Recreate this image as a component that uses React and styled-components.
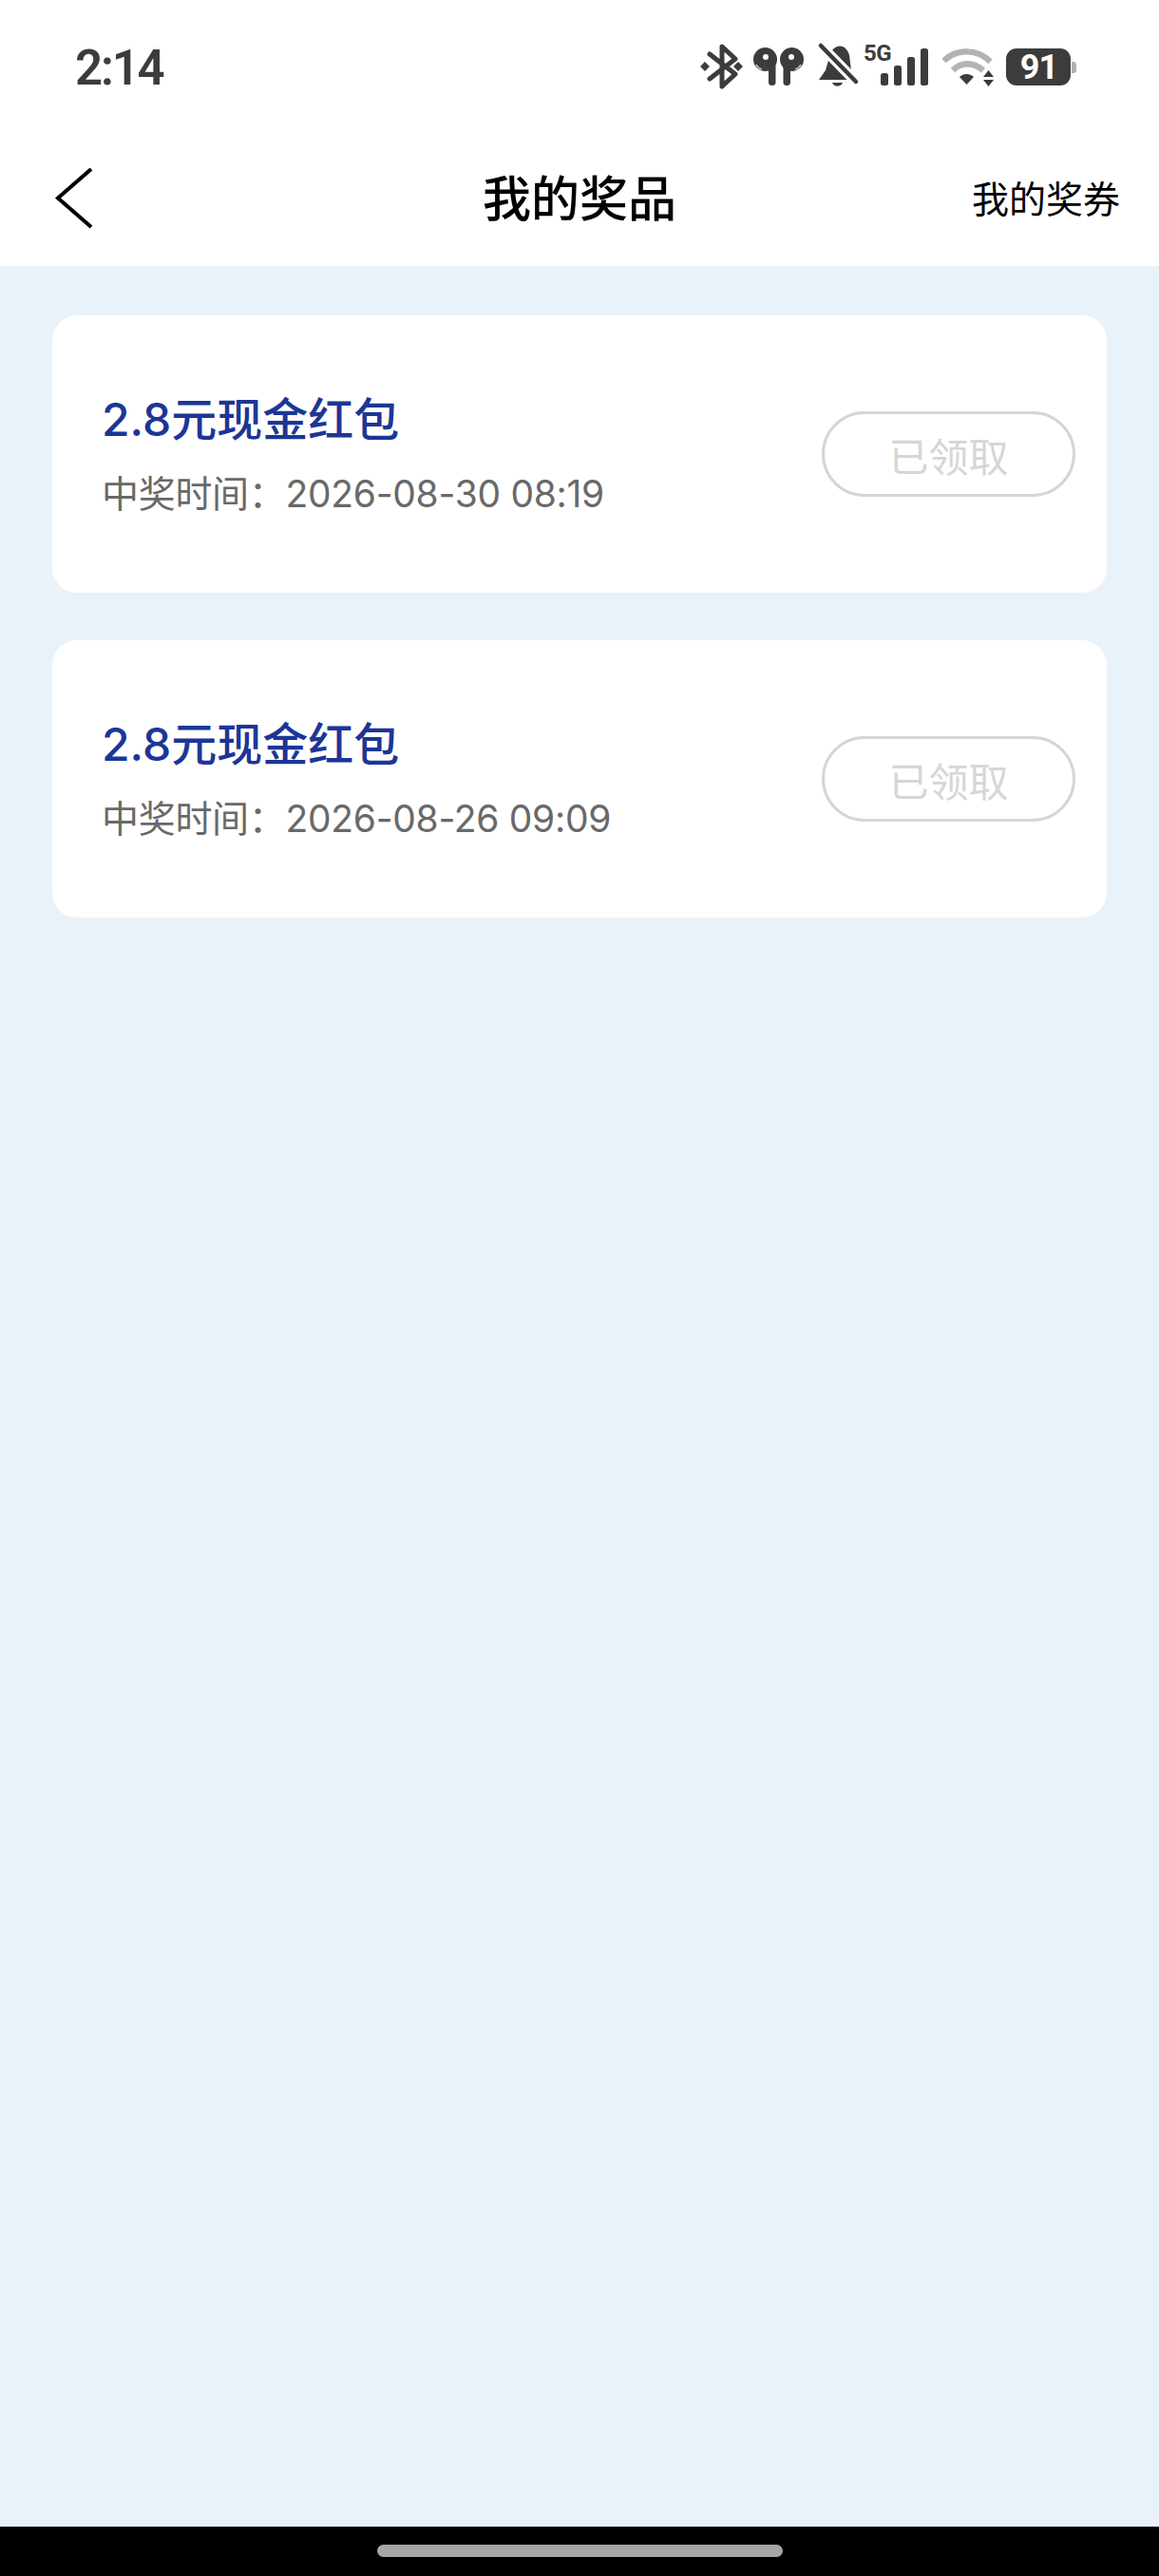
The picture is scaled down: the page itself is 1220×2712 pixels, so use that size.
import React from "react";
import styled, { createGlobalStyle } from "styled-components";

const prizes = [
  { title: "2.8元现金红包", time: "2026-08-30 08:19" },
  { title: "2.8元现金红包", time: "2026-08-26 09:09" },
];

const GlobalStyle = createGlobalStyle`
  html, body {
    margin: 0;
    padding: 0;
    background: #e9f2f9;
  }
  * {
    box-sizing: border-box;
  }
`;

const Screen = styled.div`
  width: 1220px;
  height: 2712px;
  display: flex;
  flex-direction: column;
  background: #e9f2f9;
  font-family: Inter, "Noto Sans CJK SC", sans-serif;
`;

const StatusBar = styled.div`
  height: 140px;
  flex: none;
  background: #fff;
  display: flex;
  align-items: flex-start;
  justify-content: space-between;
  padding: 0 85px 0 79px;
`;

const Clock = styled.div`
  font-family: Roboto, sans-serif;
  font-size: 51px;
  line-height: 60px;
  letter-spacing: -2.2px;
  font-weight: 600;
  color: #3c3c3c;
  margin-top: 42px;
`;

const StatusIcons = styled.svg`
  display: block;
  width: 396px;
  height: 66px;
  margin-top: 44px;
  overflow: visible;
`;

const NavBar = styled.div`
  height: 140px;
  flex: none;
  background: #fff;
  display: grid;
  grid-template-columns: 1fr auto 1fr;
  align-items: center;
  padding: 0 41px;
`;

const BackIcon = styled.svg`
  display: block;
  width: 44px;
  height: 66px;
  margin-left: 15px;
`;

const NavTitle = styled.div`
  font-size: 51px;
  font-weight: 500;
  color: #000;
  line-height: 60px;
`;

const NavLink = styled.div`
  justify-self: end;
  font-size: 39px;
  color: #000;
  line-height: 50px;
`;

const List = styled.div`
  display: flex;
  flex-direction: column;
  gap: 50px;
  padding: 52px 55px 0;
  flex: 1;
`;

const Card = styled.div`
  height: 292px;
  background: #fff;
  border-radius: 26px;
  display: flex;
  align-items: center;
  justify-content: space-between;
  padding: 0 33px 0 52px;
`;

const Info = styled.div`
  display: flex;
  flex-direction: column;
  gap: 23px;
`;

const PrizeName = styled.div`
  font-size: 48px;
  font-weight: 500;
  line-height: 60px;
  color: #1c3696;
`;

const PrizeTime = styled.div`
  font-size: 39px;
  line-height: 50px;
  letter-spacing: -0.3px;
  color: #696969;
`;

const ClaimedButton = styled.div`
  width: 267px;
  height: 90px;
  border: 3px solid #d5d5d5;
  border-radius: 45px;
  display: flex;
  align-items: center;
  justify-content: center;
  font-size: 42px;
  color: #d6d6d6;
`;

const GestureBar = styled.div`
  height: 52px;
  flex: none;
  background: #000;
  display: flex;
  justify-content: center;
  padding-top: 19px;
`;

const GesturePill = styled.div`
  width: 427px;
  height: 13px;
  border-radius: 7px;
  background: #a6a6a6;
`;

function StatusGlyphs() {
  return (
    <StatusIcons viewBox="741 44 396 66">
      {/* bluetooth */}
      <path d="M762 91 V49 L776 62 L749 83 M762 91 L776 78 L749 57" fill="none" stroke="#3c3c3c" strokeWidth="5" strokeLinejoin="round" strokeLinecap="round" />
      <rect x="740.5" y="66.5" width="7" height="7" transform="rotate(45 744 70)" fill="#3c3c3c" />
      <rect x="775.5" y="66.5" width="7" height="7" transform="rotate(45 779 70)" fill="#3c3c3c" />
      {/* earbuds */}
      <circle cx="807.5" cy="62.5" r="12.5" fill="#3c3c3c" />
      <rect x="811" y="66" width="7.5" height="24" rx="3.5" fill="#3c3c3c" />
      <circle cx="808" cy="60" r="3" fill="#fff" />
      <path d="M798 68 Q800 72 804 73" fill="none" stroke="#fff" strokeWidth="1.6" opacity="0.7" />
      <circle cx="835.5" cy="62.5" r="12.5" fill="#3c3c3c" />
      <rect x="826.5" y="66" width="7.5" height="24" rx="3.5" fill="#3c3c3c" />
      <circle cx="835" cy="60" r="3" fill="#fff" />
      <path d="M845 68 Q843 72 839 73" fill="none" stroke="#fff" strokeWidth="1.6" opacity="0.7" />
      {/* muted bell */}
      <path d="M875 60 C878 46 892 44 896 58 L898 74 L903 84 H864 L871 74 Z" fill="#3c3c3c" />
      <path d="M878 87 H889 C887 92 880 92 878 87 Z" fill="#3c3c3c" />
      <path d="M862 44 L906 89" stroke="#fff" strokeWidth="11" />
      <path d="M866 48 L903 86" stroke="#3c3c3c" strokeWidth="4.5" strokeLinecap="round" />
      {/* 5G and signal */}
      <text x="911" y="64" fontFamily="Roboto, sans-serif" fontWeight="700" fontSize="24" letterSpacing="-0.5" fill="#3c3c3c">5G</text>
      <rect x="929" y="77" width="8" height="13" rx="2.5" fill="#3c3c3c" />
      <rect x="943" y="69" width="8" height="21" rx="2.5" fill="#3c3c3c" />
      <rect x="957" y="60" width="8" height="30" rx="2.5" fill="#3c3c3c" />
      <rect x="971" y="51" width="8" height="39" rx="2.5" fill="#3c3c3c" />
      {/* wifi */}
      <path d="M995.5 64 C1009 51 1031 51 1044.5 65" fill="none" stroke="#b3b3b3" strokeWidth="6.5" />
      <path d="M1005 74 C1014 65 1026 65 1037 74" fill="none" stroke="#b3b3b3" strokeWidth="6.5" />
      <path d="M1012 81 C1016 77 1023 77 1027 81 L1019.5 89 Z" fill="#3c3c3c" />
      <path d="M1037 81 L1042.5 74 L1048 81 Z M1037 84 H1048 L1042.5 91 Z" fill="#3c3c3c" />
      {/* battery */}
      <rect x="1061" y="51" width="68" height="39" rx="11" fill="#3c3c3c" />
      <path d="M1130 65 H1132 C1134 65 1135 66 1135 68 V74 C1135 76 1134 77 1132 77 H1130 Z" fill="#b3b3b3" />
      <text x="1095.5" y="83" textAnchor="middle" fontFamily="Roboto, sans-serif" fontWeight="700" fontSize="36" letterSpacing="-1" fill="#fff">91</text>
    </StatusIcons>
  );
}

export default function App() {
  return (
    <Screen>
      <GlobalStyle />
      <StatusBar>
        <Clock>2:14</Clock>
        <StatusGlyphs />
      </StatusBar>
      <NavBar>
        <BackIcon viewBox="0 0 44 66">
          <path d="M40 1 L5 31.5 L40 62" fill="none" stroke="#000" strokeWidth="4" />
        </BackIcon>
        <NavTitle>我的奖品</NavTitle>
        <NavLink>我的奖券</NavLink>
      </NavBar>
      <List>
        {prizes.map((prize) => (
          <Card key={prize.time}>
            <Info>
              <PrizeName>{prize.title}</PrizeName>
              <PrizeTime>中奖时间：{prize.time}</PrizeTime>
            </Info>
            <ClaimedButton>已领取</ClaimedButton>
          </Card>
        ))}
      </List>
      <GestureBar>
        <GesturePill />
      </GestureBar>
    </Screen>
  );
}
